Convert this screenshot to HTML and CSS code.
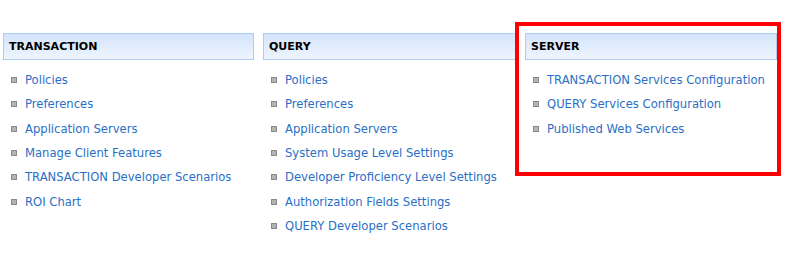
FILE: index.html
```html
<!DOCTYPE html>
<html lang="en">
<head>
    <meta charset="UTF-8">
    <title>Configuration</title>
    <link rel="stylesheet" href="styles.css">
</head>
<body>

    <div class="page">
        <div class="columns">
            <div class="column">
                <div class="col-header">TRANSACTION</div>
                <ul class="links">
                    <li><a href="#">Policies</a></li>
                    <li><a href="#">Preferences</a></li>
                    <li><a href="#">Application Servers</a></li>
                    <li><a href="#">Manage Client Features</a></li>
                    <li><a href="#">TRANSACTION Developer Scenarios</a></li>
                    <li><a href="#">ROI Chart</a></li>
                </ul>
            </div>

            <div class="column">
                <div class="col-header">QUERY</div>
                <ul class="links">
                    <li><a href="#">Policies</a></li>
                    <li><a href="#">Preferences</a></li>
                    <li><a href="#">Application Servers</a></li>
                    <li><a href="#">System Usage Level Settings</a></li>
                    <li><a href="#">Developer Proficiency Level Settings</a></li>
                    <li><a href="#">Authorization Fields Settings</a></li>
                    <li><a href="#">QUERY Developer Scenarios</a></li>
                </ul>
            </div>

            <div class="column">
                <div class="col-header">SERVER</div>
                <ul class="links">
                    <li><a href="#">TRANSACTION Services Configuration</a></li>
                    <li><a href="#">QUERY Services Configuration</a></li>
                    <li><a href="#">Published Web Services</a></li>
                </ul>
            </div>
        </div>

        <!-- highlight round the server column -->
        <div class="highlight"></div>
    </div>

</body>
</html>
```

FILE: styles.css
```css
body {
    margin: 0;
    background: #fff;
    font-family: "DejaVu Sans", Verdana, sans-serif;
}

.page {
    position: relative;
    padding: 33px 0 0 3px;
}

.columns {
    display: grid;
    grid-template-columns: 251px 253px 252px;
    gap: 9px;
}

/* Column headers */
.col-header {
    height: 25px;
    line-height: 26px;
    padding-left: 5px;
    border: 1px solid #aacdf4;
    background: linear-gradient(#d4e4fb, #eef5fe);
    font-size: 11px;
    font-weight: bold;
    color: #000;
}

/* Link lists */
.links {
    list-style: none;
    margin: 8px 0 0;
    padding: 0;
}

.links li {
    display: flex;
    align-items: center;
    height: 24.33px;
    padding-left: 8px;
}

.links li::before {
    content: "";
    width: 4px;
    height: 4px;
    margin-right: 8px;
    border: 1px solid #8a8a8a;
    background: #b4b4b4;
}

.links a {
    color: #2a6fc6;
    text-decoration: none;
    font-size: 11.6px;
}

/* Red box */
.highlight {
    position: absolute;
    left: 515px;
    top: 22px;
    width: 258px;
    height: 146px;
    border: 4px solid #ff0000;
}
```
